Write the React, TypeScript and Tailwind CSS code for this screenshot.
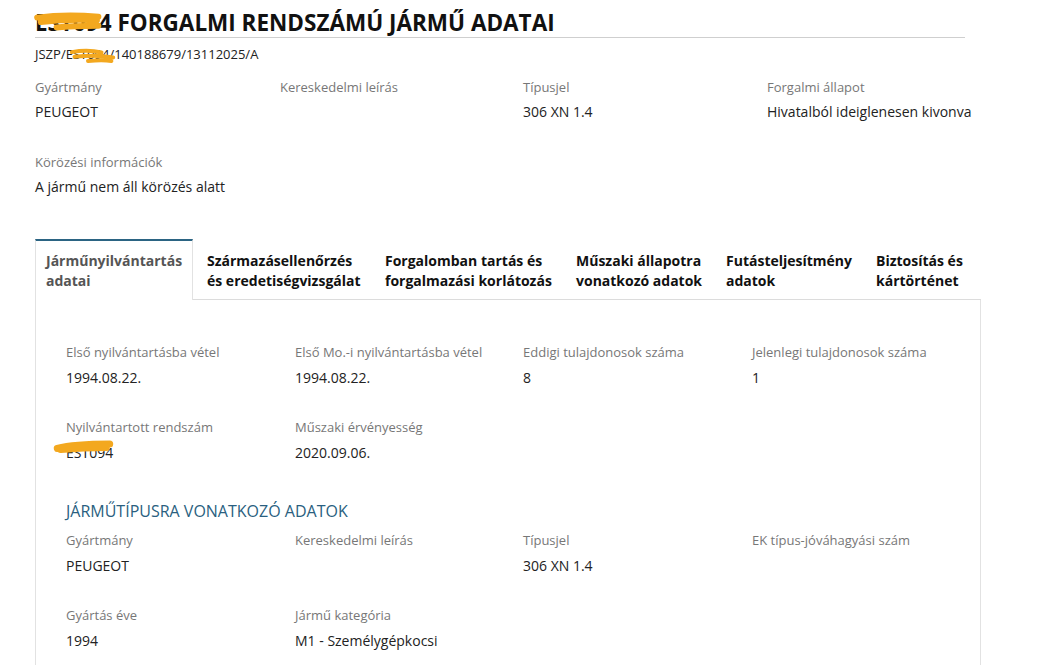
import React from "react";

const PLATE = "EST094";

function Scribble({ className, d, w = 5 }: { className: string; d: string; w?: number }) {
  return (
    <svg className={`pointer-events-none absolute overflow-visible ${className}`} viewBox="0 0 100 40" preserveAspectRatio="none">
      <path
        d={d}
        fill="none"
        stroke="#f3a81f"
        strokeWidth={w}
        strokeLinecap="round"
        strokeLinejoin="round"
        vectorEffect="non-scaling-stroke"
      />
    </svg>
  );
}

function Field({ label, value, gap = "mt-[6px]" }: { label: string; value?: React.ReactNode; gap?: string }) {
  return (
    <div>
      <div className="text-[13px] leading-[18px] text-[#777]">{label}</div>
      <div className={`${gap} h-[20px] text-[14px] leading-[20px] text-[#222]`}>{value}</div>
    </div>
  );
}

function PField(props: { label: string; value?: React.ReactNode }) {
  return <Field {...props} gap="mt-[7px]" />;
}

const tabs = [
  ["Származásellenőrzés", "és eredetiségvizsgálat"],
  ["Forgalomban tartás és", "forgalmazási korlátozás"],
  ["Műszaki állapotra", "vonatkozó adatok"],
  ["Futásteljesítmény", "adatok"],
  ["Biztosítás és", "kártörténet"],
];

const tabWidths = ["w-[192px] pl-[14px]", "w-[191px]", "w-[150px]", "w-[150px]", "flex-1"];

export default function App() {
  return (
    <div className="min-h-[665px] bg-white pl-[35px] pt-[10px] font-['Open_Sans',sans-serif] text-[#222]">
      {/* header */}
      <div className="w-[930px] border-b border-[#cfcfcf] pb-[1px]">
        <h1 className="relative text-[22.5px] font-bold leading-[26px] text-[#111]">
          {PLATE} FORGALMI RENDSZÁMÚ JÁRMŰ ADATAI
          <Scribble
            className="left-0 top-[4px] h-[18px] w-[72px]"
            d="M3 8 C30 2 60 2 88 6 M8 18 C40 12 65 12 86 14 M30 30 C50 26 70 26 88 26"
            w={6}
          />
        </h1>
      </div>
      <div className="relative mt-[6px] text-[13px] leading-[20px]">
        JSZP/{PLATE}/140188679/13112025/A
        <Scribble
          className="left-[35px] top-[5px] h-[14px] w-[45px]"
          d="M4 9 C25 4 50 4 70 10 M10 22 C40 18 70 18 96 24 M40 34 C60 32 80 32 92 34"
          w={4}
        />
      </div>

      <div className="mt-[14px] grid grid-cols-[245px_243px_244px_250px]">
        <Field label="Gyártmány" value="PEUGEOT" />
        <Field label="Kereskedelmi leírás" />
        <Field label="Típusjel" value="306 XN 1.4" />
        <Field label="Forgalmi állapot" value="Hivatalból ideiglenesen kivonva" />
      </div>
      <div className="mt-[31px]">
        <Field label="Körözési információk" value="A jármű nem áll körözés alatt" />
      </div>

      {/* tabs */}
      <div className="mt-[42px] w-[946px]">
        <div className="flex">
          <div className="h-[61px] w-[158px] border-x border-t-2 border-x-[#e2e2e2] border-t-[#2b6483] bg-white px-[10px] pt-[10px] text-[14px] font-bold leading-[20px] text-[#555]">
            Járműnyilvántartás
            <br />
            adatai
          </div>
          <div className="flex h-[61px] flex-1 border-b border-[#dcdcdc] pt-[12px]">
            {tabs.map((t, i) => (
              <div key={i} className={`text-[14px] font-bold leading-[20px] text-[#111] ${tabWidths[i]}`}>
                {t[0]}
                <br />
                {t[1]}
              </div>
            ))}
          </div>
        </div>
        <div className="h-[365px] border-x border-[#e2e2e2] pl-[30px] pt-[43px]">
          <div className="grid grid-cols-[229px_228px_229px_200px]">
            <PField label="Első nyilvántartásba vétel" value="1994.08.22." />
            <PField label="Első Mo.-i nyilvántartásba vétel" value="1994.08.22." />
            <PField label="Eddigi tulajdonosok száma" value="8" />
            <PField label="Jelenlegi tulajdonosok száma" value="1" />
          </div>
          <div className="mt-[30px] grid grid-cols-[229px_228px_229px_200px]">
            <PField
              label="Nyilvántartott rendszám"
              value={
                <span className="relative inline-block">
                  {PLATE}
                  <Scribble
                    className="left-[-11px] top-[-1px] h-[10px] w-[57px]"
                    d="M4 26 C30 10 60 8 96 8 M10 30 C40 24 70 22 90 22"
                    w={7}
                  />
                </span>
              }
            />
            <PField label="Műszaki érvényesség" value="2020.09.06." />
          </div>
          <h2 className="mt-[37px] text-[16px] leading-[22px] text-[#2a5f80]">JÁRMŰTÍPUSRA VONATKOZÓ ADATOK</h2>
          <div className="mt-[9px] grid grid-cols-[229px_228px_229px_200px]">
            <PField label="Gyártmány" value="PEUGEOT" />
            <PField label="Kereskedelmi leírás" />
            <PField label="Típusjel" value="306 XN 1.4" />
            <PField label="EK típus-jóváhagyási szám" />
          </div>
          <div className="mt-[30px] grid grid-cols-[229px_228px_229px_200px]">
            <PField label="Gyártás éve" value="1994" />
            <PField label="Jármű kategória" value="M1 - Személygépkocsi" />
          </div>
        </div>
      </div>
    </div>
  );
}
